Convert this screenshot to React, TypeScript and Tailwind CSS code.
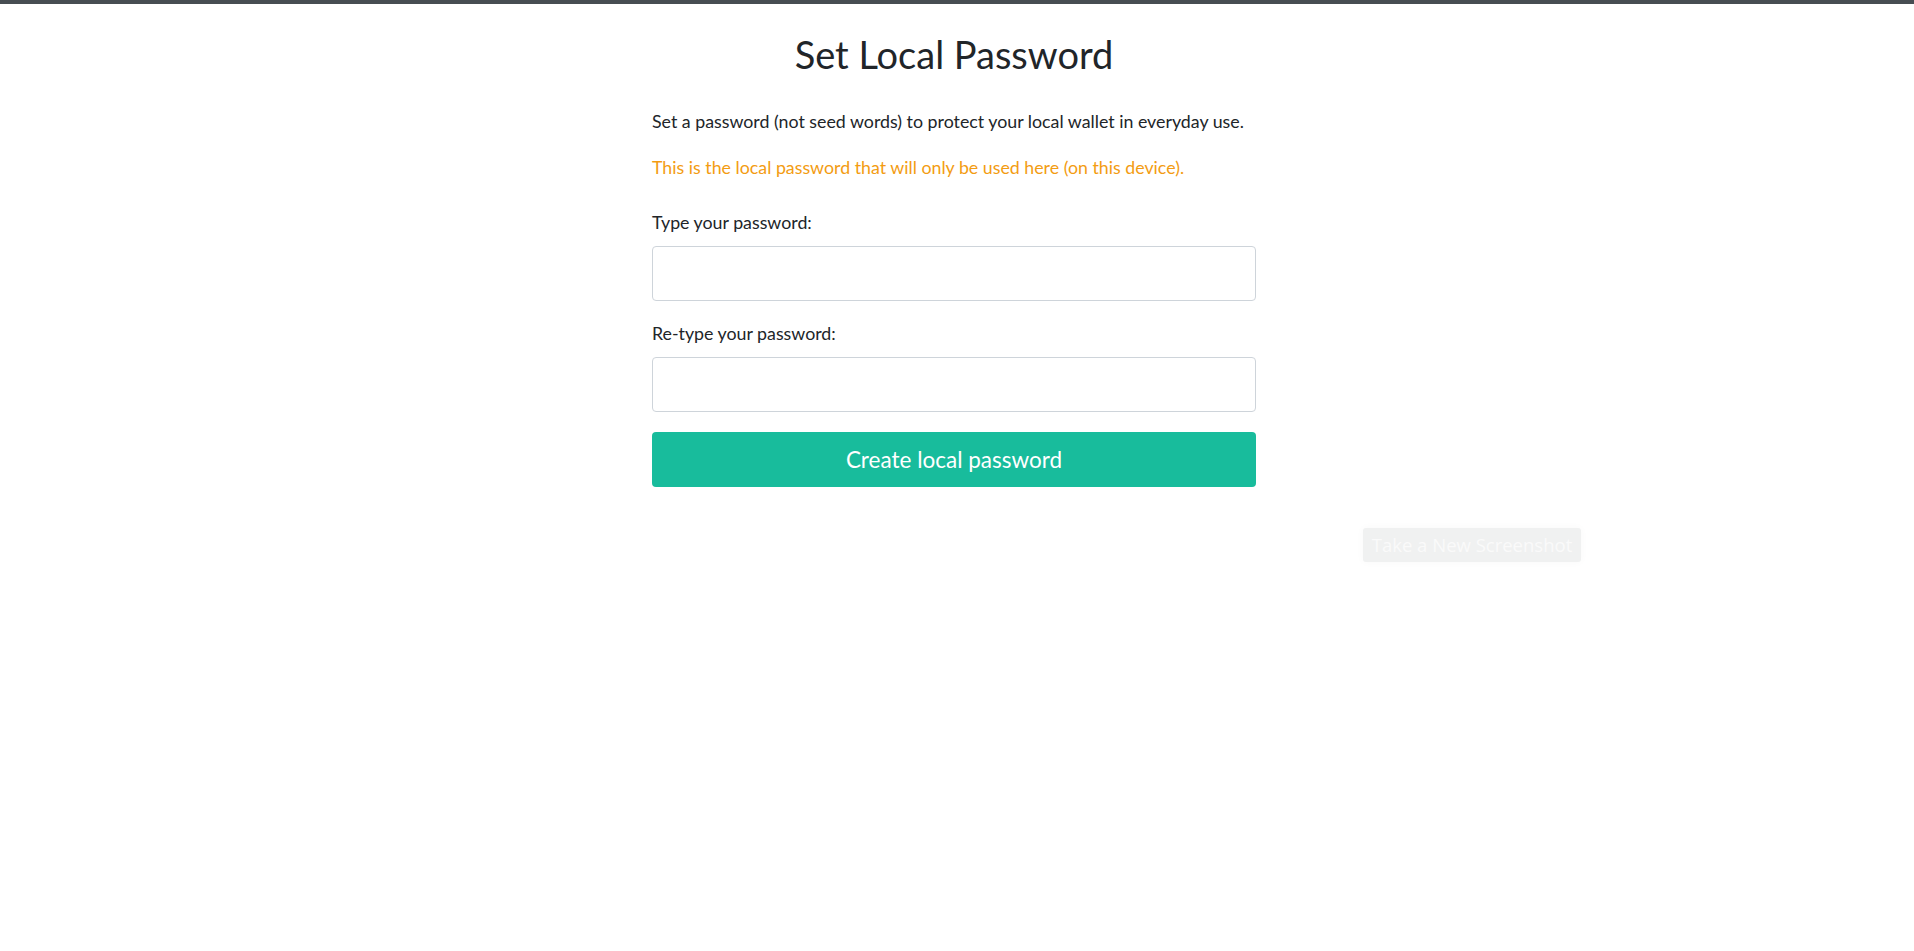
export default function App() {
  return (
    <div className="relative min-h-[951px] bg-white font-['Lato','Open_Sans',sans-serif] text-[#212529]">
      <div className="h-[4px] bg-[#474d52]" />

      <div className="mx-auto w-[610px] pr-[6px]">
        <h1 className="mt-[29px] text-center text-[38px] leading-[43px] font-normal text-[#212529]">
          Set Local Password
        </h1>

        <p className="mt-[32px] text-[17.8px] leading-[27px]">
          Set a password (not seed words) to protect your local wallet in everyday use.
        </p>
        <p className="mt-[19px] text-[17.8px] leading-[27px] text-[#f39c12]">
          This is the local password that will only be used here (on this device).
        </p>

        <form className="mt-[28px] flex flex-col">
          <label className="text-[17.8px] leading-[27px]">Type your password:</label>
          <input
            type="password"
            className="mt-[10px] h-[55px] w-full rounded-[4px] border border-[#ced4da] bg-white px-4 outline-none"
          />
          <label className="mt-[19px] text-[17.8px] leading-[27px]">Re-type your password:</label>
          <input
            type="password"
            className="mt-[10px] h-[55px] w-full rounded-[4px] border border-[#ced4da] bg-white px-4 outline-none"
          />
          <button
            type="button"
            className="mt-[20px] h-[55px] w-full rounded-[4px] bg-[#18bc9c] text-[22.5px] text-white"
          >
            Create local password
          </button>
        </form>
      </div>

      <div className="absolute left-[1363px] top-[528px] flex h-[34px] w-[218px] items-center justify-center rounded-[3px] bg-[#f0f1f1] font-['Open_Sans',sans-serif] text-[18.5px] text-[#fafafa] shadow-[0_0_8px_rgba(0,0,0,0.03)]">
        Take a New Screenshot
      </div>
    </div>
  )
}
